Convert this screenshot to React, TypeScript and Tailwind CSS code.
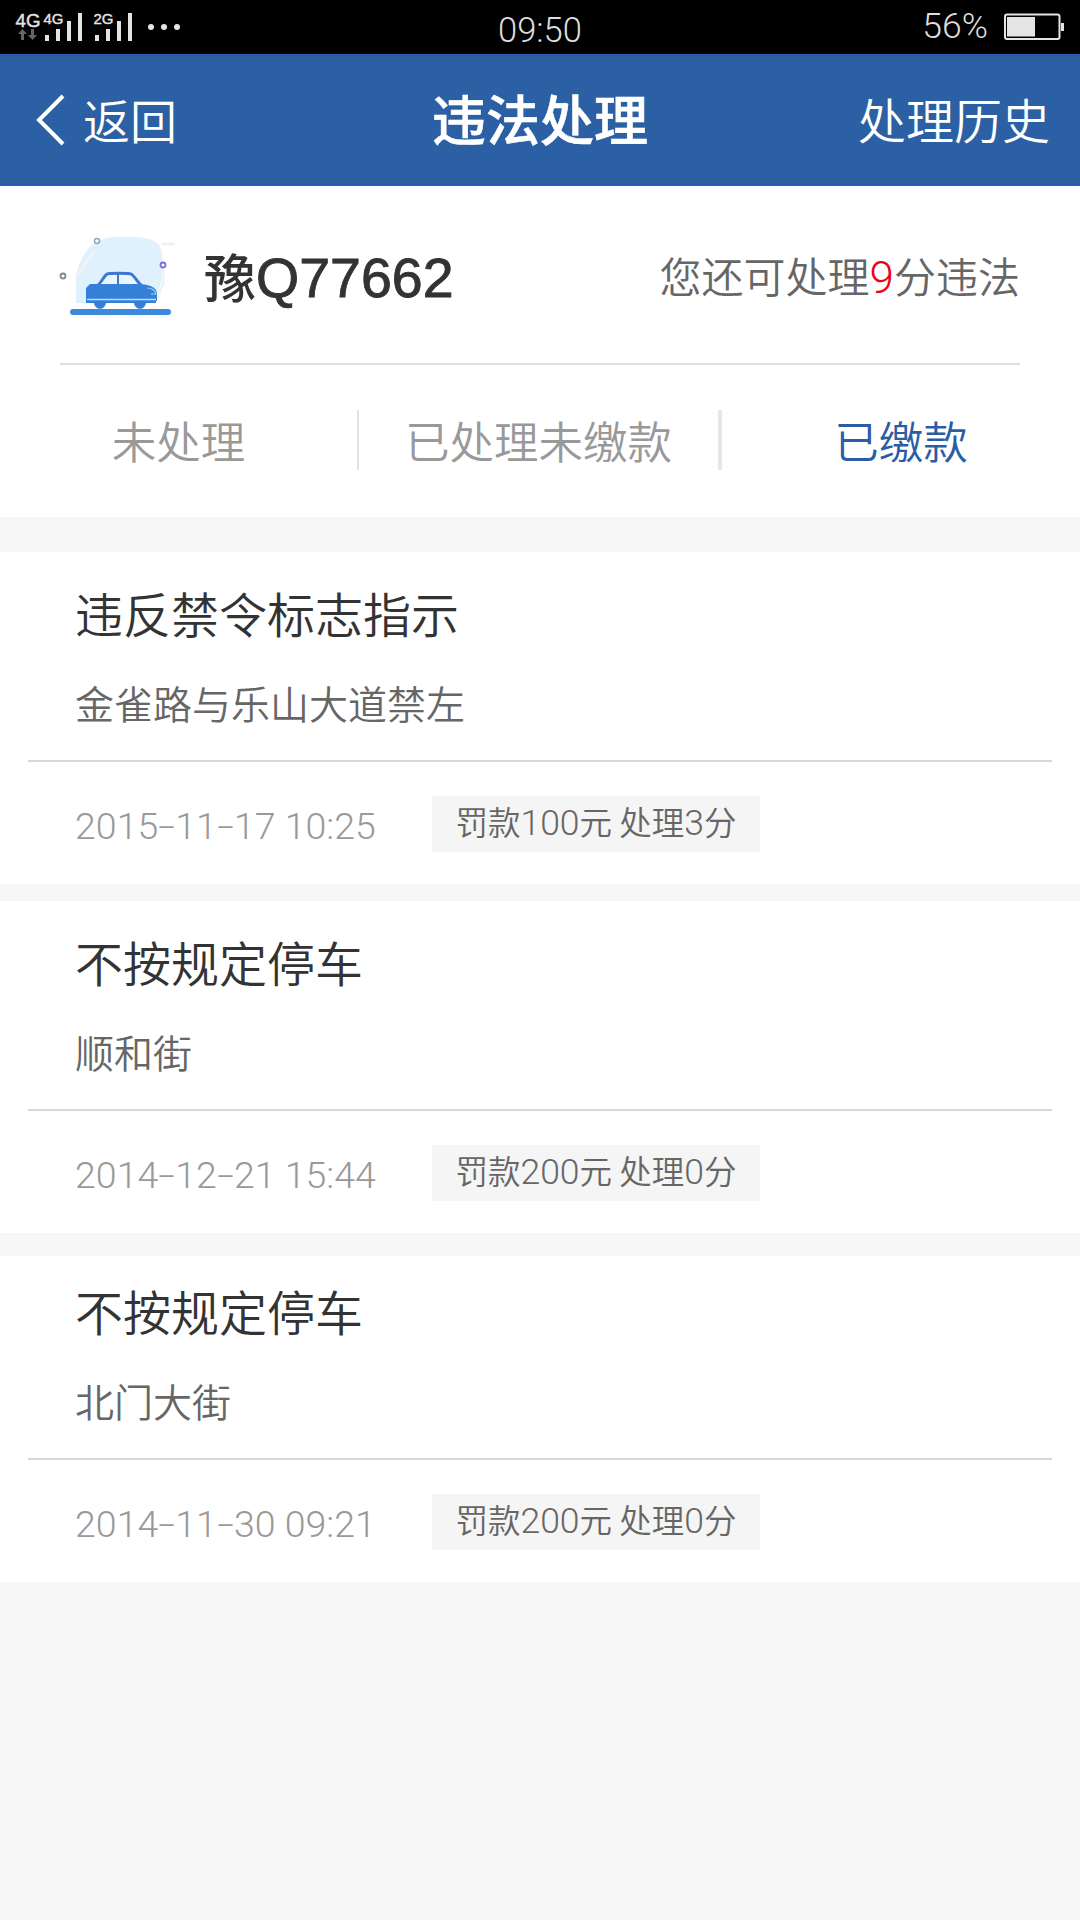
import React from 'react';

const cjk = "font-['Noto_Sans_CJK_SC',sans-serif]";

const records = [
  { title: '违反禁令标志指示', place: '金雀路与乐山大道禁左', date: '2015-11-17 10:25', fine: '100', points: '3', frame: 'mb-[17px]' },
  { title: '不按规定停车', place: '顺和街', date: '2014-12-21 15:44', fine: '200', points: '0', frame: '' },
  { title: '不按规定停车', place: '北门大街', date: '2014-11-30 09:21', fine: '200', points: '0', frame: 'border-t-[23px] border-[#f7f7f7]' },
];

function Num({ children, className = '' }: { children: React.ReactNode; className?: string }) {
  return <span className={`font-['Roboto',sans-serif] font-light ${className}`}>{children}</span>;
}

function DateText({ value }: { value: string }) {
  return (
    <Num>
      {value.split('').map((c, i) =>
        c === '-' ? (
          <span key={i} className="inline-block w-[17px] scale-x-[1.6] text-center">-</span>
        ) : (
          <React.Fragment key={i}>{c}</React.Fragment>
        ),
      )}
    </Num>
  );
}

function Signals() {
  return (
    <svg width="190" height="54" viewBox="0 0 190 54" fill="#e4e4e4">
      <g fontFamily="Liberation Sans, sans-serif">
        <text x="15.500" y="26.500" fontSize="19" textLength="25" lengthAdjust="spacingAndGlyphs" stroke="#e4e4e4" strokeWidth=".4">4G</text>
        <text x="43.500" y="24" fontSize="15.500" textLength="20" lengthAdjust="spacingAndGlyphs" stroke="#e4e4e4" strokeWidth=".4">4G</text>
        <text x="93.500" y="24" fontSize="15.500" textLength="20" lengthAdjust="spacingAndGlyphs" stroke="#e4e4e4" strokeWidth=".4">2G</text>
      </g>
      <path d="M18 34l4.500-5 4.500 5h-3v6h-3v-6zM28 35l4.500 5 4.500-5h-3v-6h-3v6z" fill="#666" />
      <path d="M45 35h4v6h-4zM56 29h4v12h-4zM67 21h4v20h-4zM78 13h4v28h-4zM95 35h4v6h-4zM106 29h4v12h-4zM117 21h4v20h-4zM128 13h4v28h-4z" />
      <circle cx="151" cy="27" r="3" />
      <circle cx="164" cy="27" r="3" />
      <circle cx="177" cy="27" r="3" />
    </svg>
  );
}

function Battery() {
  return (
    <svg width="62" height="30" viewBox="0 0 62 30">
      <rect x="1" y="2.500" width="54.500" height="24.500" rx="2" fill="none" stroke="#e4e4e4" strokeWidth="2" />
      <rect x="3" y="5" width="28" height="19.500" fill="#e4e4e4" />
      <rect x="57" y="11" width="3" height="8" fill="#e4e4e4" />
    </svg>
  );
}

function Car() {
  return (
    <svg width="140" height="110" viewBox="0 0 140 110" fill="none">
      <path d="M36 83V61c0-14 6-23 12-32 6-7 14-11 27-12 20-1 38 0 44 8 5 8 4 24 2 37l-6 21z" fill="#e0f1fe" />
      <path d="M36 58c5-10 12-16 18-27M123 49v15l-8 18M122 24h13" stroke="#f0f2f6" strokeWidth="3" />
      <path d="M58 65c3-2 6-9 9-11 2-1 22-1 24 0 4 2 6 8 10 11" stroke="#3d78ce" strokeWidth="3" fill="#e8f5ff" />
      <path d="M78 53v12" stroke="#3d78ce" strokeWidth="2" />
      <path d="M50 64h51c9 1 15 3 16 9v8H46V68z" fill="#3480d9" />
      <path d="M47 79.500h69" stroke="#b9dcff" strokeWidth="1.500" />
      <path d="M46 82h70" stroke="#3480d9" strokeWidth="2" />
      <path d="M107 68c5 0 8 2 9 6h-5" stroke="#a5cdfa" strokeWidth="1.200" />
      <path d="M54 82h12c0 9-12 9-12 0zM94 82h12c0 9-12 9-12 0z" fill="#3480d9" />
      <path d="M33 92h95" stroke="#3d8adb" strokeWidth="6" strokeLinecap="round" />
      <circle cx="57" cy="21" r="2.500" stroke="#91a8b8" strokeWidth="1.500" />
      <circle cx="123" cy="45" r="2.500" stroke="#866bd4" strokeWidth="1.800" />
      <circle cx="23" cy="56" r="2.500" stroke="#85858c" strokeWidth="1.800" />
    </svg>
  );
}

export default function App() {
  return (
    <div className={`h-[1920px] w-[1080px] overflow-hidden bg-[#f7f7f7] font-[350] ${cjk}`}>
      <div className="grid h-[54px] grid-cols-3 items-center bg-black text-[#dedede]">
        <Signals />
        <div className="pt-[3px] text-center text-[34.5px] leading-none"><Num>09:50</Num></div>
        <div className="flex items-center justify-end gap-4 pr-[14px] text-[35.5px] leading-none">
          <Num>56%</Num>
          <Battery />
        </div>
      </div>

      <header className="grid h-[132px] grid-cols-3 items-center border-y-2 border-[#295bb5] bg-[#2c60a4] text-white">
        <div className="flex items-center pl-9">
          <svg width="30" height="52" viewBox="0 0 30 52" fill="none" stroke="white" strokeWidth="4">
            <path d="M27 2L3 26l24 24" />
          </svg>
          <span className="ml-[17px] pb-1 text-[47px] leading-none">返回</span>
        </div>
        <h1 className="pb-1 text-center text-[54px] font-medium leading-none [-webkit-text-stroke:0.6px_white]">违法处理</h1>
        <div className="pb-1 pr-[30px] text-right text-[48px] leading-none">处理历史</div>
      </header>

      <section className="h-[331px] bg-white">
        <div className="mx-[60px] flex h-[179px] items-center border-b-2 border-[#dedede]">
          <div className="-ml-5 w-[164px]"><Car /></div>
          <div className="flex items-center pt-0.5 text-[52px] font-medium leading-none text-[#333]">
            豫<span className="pt-1.5 font-['Liberation_Sans',sans-serif] text-[55.5px] font-normal [-webkit-text-stroke:0.9px_#333]">Q77662</span>
          </div>
          <div className="ml-auto pt-1 text-[42px] leading-none text-[#666]">
            您还可处理<Num className="text-[44px] text-[#f00018]">9</Num>分违法
          </div>
        </div>
        <div className="flex h-[150px] items-center text-[44.5px] leading-none text-[#999]">
          <div className="flex h-[60px] w-[359px] items-center justify-center border-r-2 border-[#e2e2e2]">未处理</div>
          <div className="flex h-[60px] w-[363px] items-center justify-center border-r-4 border-[#e6e6e6]">已处理未缴款</div>
          <div className="flex h-[60px] flex-1 items-center justify-center text-[#2c5ca6]">已缴款</div>
        </div>
      </section>

      <main className="mt-[35px]">
        {records.map((r) => (
          <article key={r.date} className={`bg-white ${r.frame}`}>
            <div className={`mx-7 border-b-2 border-[#d8d8d8] pl-[47px] ${r.frame.startsWith('border') ? 'h-[204px] pt-[30px]' : 'h-[210px] pt-[36px]'}`}>
              <h2 className="text-[48px] leading-[48px] text-[#333]">{r.title}</h2>
              <p className="pt-[47px] text-[39px] leading-[39px] text-[#666]">{r.place}</p>
            </div>
            <div className="flex h-[122px] items-center pl-[75px] pt-0.5">
              <div className="w-[357px] pt-0.5 text-[37.5px] leading-none text-[#999]"><DateText value={r.date} /></div>
              <div className="flex h-[56px] w-[328px] items-center justify-center whitespace-pre bg-[#f5f5f5] pb-0.5 text-[32.500px] leading-none text-[#666]">
                <span>罚款<Num className="text-[35.5px]">{r.fine}</Num>元 处理<Num className="text-[35.5px]">{r.points}</Num>分</span>
              </div>
            </div>
          </article>
        ))}
      </main>
    </div>
  );
}
